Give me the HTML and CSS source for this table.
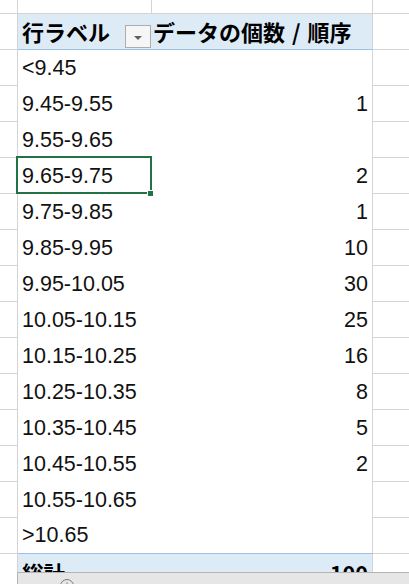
FILE: index.html
```html
<!DOCTYPE html>
<html lang="ja">
<head>
<meta charset="utf-8">
<link rel="stylesheet" href="styles.css">
</head>
<body>
<div class="sheet">
  <div class="grid">
    <div class="c0 top"></div><div class="ca top"></div><div class="cb top"></div><div class="cc top"></div>

    <div class="c0"></div>
    <div class="ca hdr"><span class="hlabel">行ラベル</span><span class="dd"><span class="tri"></span></span></div>
    <div class="cb hdr"><span class="hlabel hb">データの個数 / 順序</span></div>
    <div class="cc"></div>

    <div class="c0"></div><div class="ca">&lt;9.45</div><div class="cb"></div><div class="cc"></div>
    <div class="c0"></div><div class="ca">9.45-9.55</div><div class="cb">1</div><div class="cc"></div>
    <div class="c0"></div><div class="ca">9.55-9.65</div><div class="cb"></div><div class="cc"></div>
    <div class="c0"></div><div class="ca sel-cell">9.65-9.75<span class="sel"></span><span class="handle"></span></div><div class="cb">2</div><div class="cc"></div>
    <div class="c0"></div><div class="ca">9.75-9.85</div><div class="cb">1</div><div class="cc"></div>
    <div class="c0"></div><div class="ca">9.85-9.95</div><div class="cb">10</div><div class="cc"></div>
    <div class="c0"></div><div class="ca">9.95-10.05</div><div class="cb">30</div><div class="cc"></div>
    <div class="c0"></div><div class="ca">10.05-10.15</div><div class="cb">25</div><div class="cc"></div>
    <div class="c0"></div><div class="ca">10.15-10.25</div><div class="cb">16</div><div class="cc"></div>
    <div class="c0"></div><div class="ca">10.25-10.35</div><div class="cb">8</div><div class="cc"></div>
    <div class="c0"></div><div class="ca">10.35-10.45</div><div class="cb">5</div><div class="cc"></div>
    <div class="c0"></div><div class="ca">10.45-10.55</div><div class="cb">2</div><div class="cc"></div>
    <div class="c0"></div><div class="ca">10.55-10.65</div><div class="cb"></div><div class="cc"></div>
    <div class="c0"></div><div class="ca last">&gt;10.65</div><div class="cb last"></div><div class="cc"></div>

    <div class="c0"></div><div class="ca tot">総計</div><div class="cb tot">100</div><div class="cc"></div>
  </div>
  <div class="bar">
    <svg class="plus" width="16" height="16" viewBox="0 0 16 16"><circle cx="8" cy="8" r="6.5" fill="none" stroke="#7a7a7a" stroke-width="1"/><path d="M8 4.5v7M4.5 8h7" stroke="#7a7a7a" stroke-width="1"/></svg>
  </div>
</div>
</body>
</html>
```

FILE: styles.css
```css
html, body {
  margin: 0;
  padding: 0;
  background: #ffffff;
}

.sheet {
  width: 409px;
  height: 584px;
  overflow: hidden;
  display: flex;
  flex-direction: column;
}

.grid {
  height: 572px;
  overflow: hidden;
  display: grid;
  grid-template-columns: 18px 134px 221px 37px;
  grid-template-rows: 14px repeat(16, 36px);
  font-family: "Liberation Sans", Arial, "Noto Sans CJK JP", sans-serif;
  font-size: 21.5px;
  color: #111;
  flex: none;
}

.grid > div {
  box-sizing: border-box;
  display: flex;
  align-items: center;
  white-space: nowrap;
}

.c0 {
  border-right: 1px solid #d4d4d4;
  border-bottom: 1px solid #d4d4d4;
}

.cc {
  border-bottom: 1px solid #d4d4d4;
}

.ca.top {
  border-right: 1px solid #d4d4d4;
  border-bottom: 1px solid #d4d4d4;
}

.cb.top {
  border-bottom: 1px solid #d4d4d4;
}

.ca {
  padding-left: 4px;
  position: relative;
}

.cb {
  justify-content: flex-end;
  padding-right: 4px;
  border-right: 1px solid #d4d4d4;
}

.hdr {
  background: #ddebf7;
  border-bottom: 1px solid #9bc2e6;
  font-family: "Noto Sans CJK JP", sans-serif;
  font-weight: 700;
  font-size: 22px;
  color: #000;
}

.ca.hdr {
  justify-content: space-between;
  padding-right: 1px;
}

.cb.hdr {
  justify-content: flex-start;
  padding-left: 1px;
}

.hlabel {
  line-height: 1;
  margin-top: -1px;
}

.hb {
  word-spacing: 2px;
}

.dd {
  align-self: flex-end;
  margin-bottom: 1px;
  width: 26px;
  height: 23px;
  box-sizing: border-box;
  border: 1px solid #adadad;
  background: #f6f6f6;
  display: flex;
  align-items: center;
  justify-content: center;
}

.tri {
  width: 0;
  height: 0;
  border-left: 4px solid transparent;
  border-right: 4px solid transparent;
  border-top: 4px solid #606060;
  margin-top: 3px;
}

.last {
  border-bottom: 1px solid #9bc2e6;
}

.tot {
  background: #ddebf7;
  font-weight: 700;
  font-family: "Noto Sans CJK JP", "Liberation Sans", sans-serif;
  color: #000;
}

.sel {
  position: absolute;
  top: -2px;
  left: -2px;
  right: 0;
  bottom: 0;
  border: 2px solid #217346;
  pointer-events: none;
}

.handle {
  position: absolute;
  right: -2px;
  bottom: -3px;
  width: 5px;
  height: 5px;
  background: #217346;
  border: 1px solid #ffffff;
}

.bar {
  flex: none;
  height: 12px;
  margin-left: 17px;
  box-sizing: border-box;
  border-top: 1px solid #b4b4b4;
  border-left: 1px solid #b4b4b4;
  background: #e6e6e6;
  overflow: hidden;
  padding-left: 41px;
  padding-top: 5px;
}

.plus {
  display: block;
}
```
